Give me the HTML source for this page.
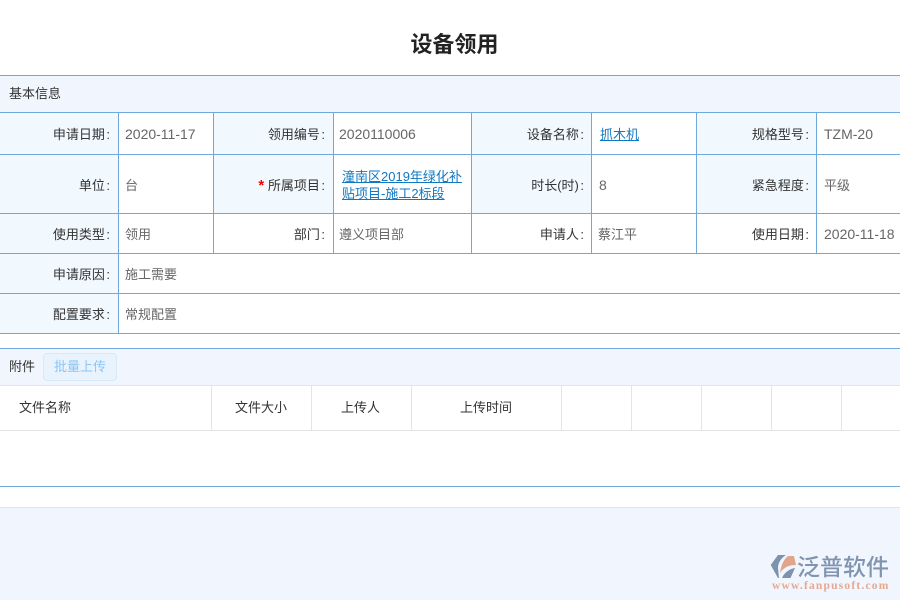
<!DOCTYPE html>
<html lang="zh">
<head>
<meta charset="utf-8">
<style>
html,body{margin:0;padding:0;background:#fff;}
body{width:900px;height:600px;position:relative;overflow:hidden;font-family:"Liberation Sans","Noto Sans CJK SC",sans-serif;font-size:13px;color:#333;}
div{position:absolute;box-sizing:border-box;}
.h{left:0;width:900px;height:1px;background:#6fa9dc;}
.g{background:#e4e4e4;}
.v{width:1px;background:#6fa9dc;}
.gv{width:1px;background:#e4e4e4;top:386px;height:44px;}
.bg{background:#f1f8fe;}
.t{white-space:nowrap;line-height:18px;height:18px;}
.l{text-align:right;color:#333;}
.l i{font-style:normal;margin-left:1.5px;margin-right:1px;}
.c{color:#666;}
.n{color:#666;font-size:14px;}
a{color:#0f78c4;text-decoration:underline;}
</style>
</head>
<body>
<div class="t" style="left:0;width:909px;top:32px;height:26px;line-height:26px;text-align:center;font-size:22px;font-weight:bold;color:#222;">设备领用</div>

<div style="left:0;top:75px;width:900px;height:38px;background:#f1f6fe;"></div>
<div class="bg" style="left:0;top:113px;width:118px;height:220px;"></div>
<div class="bg" style="left:214px;top:113px;width:119px;height:100px;"></div>
<div class="bg" style="left:472px;top:113px;width:119px;height:100px;"></div>
<div class="bg" style="left:697px;top:113px;width:119px;height:100px;"></div>

<div class="h" style="top:75px;"></div>
<div class="h" style="top:112px;"></div>
<div class="h" style="top:154px;"></div>
<div class="h" style="top:213px;"></div>
<div class="h" style="top:253px;"></div>
<div class="h" style="top:293px;"></div>
<div class="h" style="top:333px;"></div>

<div class="v" style="left:118px;top:112px;height:221px;"></div>
<div class="v" style="left:213px;top:112px;height:141px;"></div>
<div class="v" style="left:333px;top:112px;height:141px;"></div>
<div class="v" style="left:471px;top:112px;height:141px;"></div>
<div class="v" style="left:591px;top:112px;height:141px;"></div>
<div class="v" style="left:696px;top:112px;height:141px;"></div>
<div class="v" style="left:816px;top:112px;height:141px;"></div>

<div class="t" style="left:9px;top:85px;">基本信息</div>

<div class="t l" style="left:0;width:111px;top:126px;">申请日期<i>:</i></div>
<div class="t n" style="left:125px;top:125px;">2020-11-17</div>
<div class="t l" style="left:214px;width:112px;top:126px;">领用编号<i>:</i></div>
<div class="t n" style="left:339px;top:125px;">2020110006</div>
<div class="t l" style="left:472px;width:113px;top:126px;">设备名称<i>:</i></div>
<div class="t" style="left:600px;top:126px;"><a>抓木机</a></div>
<div class="t l" style="left:697px;width:113px;top:126px;">规格型号<i>:</i></div>
<div class="t n" style="left:824px;top:125px;">TZM-20</div>

<div class="t l" style="left:0;width:111px;top:177px;">单位<i>:</i></div>
<div class="t c" style="left:125px;top:177px;">台</div>
<div class="t l" style="left:214px;width:112px;top:177px;"><span style="color:#f00;font-weight:bold;font-size:15px;line-height:14px;">*</span> 所属项目<i>:</i></div>
<div class="t" style="left:342px;top:168px;height:34px;line-height:17px;"><a>潼南区2019年绿化补<br>贴项目-施工2标段</a></div>
<div class="t l" style="left:472px;width:113px;top:177px;">时长(时)<i>:</i></div>
<div class="t n" style="left:599px;top:176px;">8</div>
<div class="t l" style="left:697px;width:113px;top:177px;">紧急程度<i>:</i></div>
<div class="t c" style="left:824px;top:177px;">平级</div>

<div class="t l" style="left:0;width:111px;top:226px;">使用类型<i>:</i></div>
<div class="t c" style="left:125px;top:226px;">领用</div>
<div class="t l" style="left:214px;width:112px;top:226px;">部门<i>:</i></div>
<div class="t c" style="left:339px;top:226px;">遵义项目部</div>
<div class="t l" style="left:472px;width:113px;top:226px;">申请人<i>:</i></div>
<div class="t c" style="left:598px;top:226px;">蔡江平</div>
<div class="t l" style="left:697px;width:113px;top:226px;">使用日期<i>:</i></div>
<div class="t n" style="left:824px;top:225px;">2020-11-18</div>

<div class="t l" style="left:0;width:111px;top:266px;">申请原因<i>:</i></div>
<div class="t c" style="left:125px;top:266px;">施工需要</div>
<div class="t l" style="left:0;width:111px;top:306px;">配置要求<i>:</i></div>
<div class="t c" style="left:125px;top:306px;">常规配置</div>

<div style="left:0;top:348px;width:900px;height:38px;background:#f1f6fe;"></div>
<div class="h" style="top:348px;"></div>
<div class="h g" style="top:385px;"></div>
<div class="t" style="left:9px;top:358px;">附件</div>
<div style="left:43px;top:353px;width:74px;height:28px;background:#e8f3fd;border:1px solid #d5e9fa;border-radius:4px;text-align:center;line-height:25px;color:#8cc5f5;">批量上传</div>

<div class="t" style="left:19px;top:399px;color:#333;">文件名称</div>
<div class="t" style="left:235px;top:399px;color:#333;">文件大小</div>
<div class="t" style="left:341px;top:399px;color:#333;">上传人</div>
<div class="t" style="left:460px;top:399px;color:#333;">上传时间</div>
<div class="gv" style="left:211px;"></div>
<div class="gv" style="left:311px;"></div>
<div class="gv" style="left:411px;"></div>
<div class="gv" style="left:561px;"></div>
<div class="gv" style="left:631px;"></div>
<div class="gv" style="left:701px;"></div>
<div class="gv" style="left:771px;"></div>
<div class="gv" style="left:841px;"></div>
<div class="h g" style="top:430px;"></div>
<div class="h" style="top:486px;"></div>
<div class="h g" style="top:507px;"></div>
<div style="left:0;top:508px;width:900px;height:92px;background:#f1f6fe;"></div>

<svg style="position:absolute;left:768px;top:553px;" width="32" height="28" viewBox="0 0 32 28">
<path d="M2.7 12 L10 2 L18 2 C13 5 10 10 10 15 L11 25 L10 25 Z" fill="#7d92ad"/>
<path d="M12 20 C13 12 16 6 20 3 L26 3 L28 12 C21 12 16 14 12 20 Z" fill="#e0a58a"/>
<path d="M14 25 C16 20 21 16 27 15 L22.5 25 Z" fill="#7d92ad"/>
</svg>
<div class="t" style="left:797px;top:553px;height:28px;line-height:28px;font-size:23px;font-weight:500;color:#8094b0;">泛普软件</div>
<div class="t" style="left:772px;top:580px;height:12px;line-height:12px;font-size:11.5px;font-family:'Liberation Serif',serif;font-weight:bold;color:#e5a98f;letter-spacing:1.2px;">www.fanpusoft.com</div>
</body>
</html>
